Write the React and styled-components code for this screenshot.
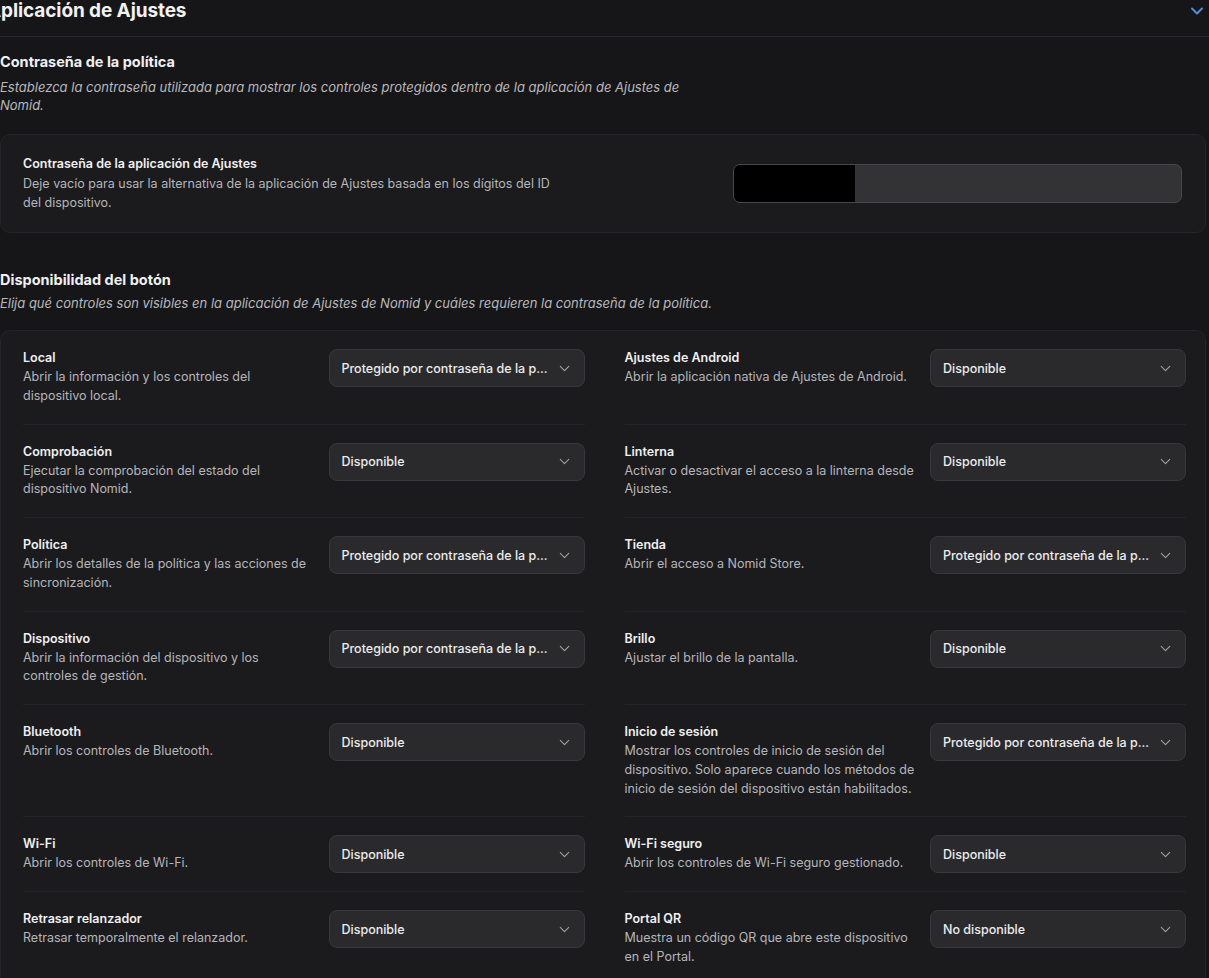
import React from "react";
import styled, { createGlobalStyle } from "styled-components";

const Global = createGlobalStyle`
  html, body { margin: 0; padding: 0; background: #161618; }
  body { font-family: Inter, "Noto Sans", "Liberation Sans", sans-serif; color: #ececee; -webkit-font-smoothing: antialiased; }
  * { box-sizing: border-box; }
`;

const Page = styled.div`
  width: 1209px;
  height: 978px;
  overflow: hidden;
  background: #161618;
`;

const Header = styled.div`
  display: flex;
  align-items: flex-start;
  justify-content: space-between;
  height: 37px;
  border-bottom: 1px solid #2a2a2e;
  padding: 0 2px 0 0;
`;

const Title = styled.h1`
  margin: 0 0 0 -13px;
  font-size: 19px;
  line-height: 22px;
  font-weight: 700;
  color: #f2f2f4;
  letter-spacing: -0.1px;
`;

const Chevron = styled.span`
  display: flex;
  margin-top: ${(p) => p.$mt || 0}px;
  color: ${(p) => p.$color || "#a2a2a6"};
`;

const Body = styled.div`
  padding: 15px 3px 0 0;
`;

const Section = styled.section`
  margin-top: ${(p) => p.$mt || 0}px;
`;

const SectionTitle = styled.h2`
  margin: 0;
  font-size: 14.5px;
  line-height: 20px;
  font-weight: 700;
  color: #f0f0f2;
`;

const SectionDesc = styled.p`
  margin: ${(p) => p.$mt || 6}px 0 0;
  max-width: ${(p) => p.$max || "none"};
  font-size: 13px;
  line-height: 18px;
  font-style: italic;
  color: #b9b9bd;
`;

const Card = styled.div`
  margin-top: ${(p) => p.$mt || 20}px;
  background: #1b1b1e;
  border: 1px solid #252529;
  border-radius: 10px;
`;

const PasswordCard = styled(Card)`
  display: flex;
  align-items: center;
  justify-content: space-between;
  padding: 20px 23px 20px 22px;
`;

const FieldText = styled.div`
  display: flex;
  flex-direction: column;
  gap: 2px;
  max-width: ${(p) => p.$max || "none"};
`;

const FieldLabel = styled.div`
  font-size: 12.5px;
  line-height: 17px;
  font-weight: 600;
  color: #f0f0f2;
`;

const FieldDesc = styled.div`
  font-size: 12.5px;
  line-height: ${(p) => p.$lh || "19px"};
  color: #b6b6ba;
`;

const Input = styled.div`
  display: flex;
  width: 449px;
  height: 39px;
  background: #333336;
  border: 1px solid #48484c;
  border-radius: 7px;
  overflow: hidden;
`;

const Redacted = styled.div`
  width: 121px;
  height: 100%;
  background: #000;
`;

const GridCard = styled(Card)`
  display: grid;
  grid-template-columns: 1fr 1fr;
  column-gap: 40px;
  padding: 0 19px 0 22px;
`;

const Item = styled.div`
  display: grid;
  grid-template-columns: 1fr 256px;
  column-gap: 14px;
  align-items: start;
  padding: 18px 0 18px;
  border-top: ${(p) => (p.$first ? "none" : "1px solid #242428")};
`;

const Select = styled.div`
  display: flex;
  align-items: center;
  justify-content: space-between;
  height: 38px;
  padding: 0 11px 0 12px;
  background: #2a2a2d;
  border: 1px solid #38383c;
  border-radius: 8px;
`;

const SelectValue = styled.span`
  font-size: 12.5px;
  font-weight: 500;
  color: #ececee;
  white-space: nowrap;
  overflow: hidden;
`;

const ChevronDown = ({ size = 12, stroke = 1.6 }) => (
  <svg width={size} height={size} viewBox="0 0 24 24" fill="none" stroke="currentColor" strokeWidth={stroke} strokeLinecap="round" strokeLinejoin="round">
    <path d="M6 9l6 6 6-6" />
  </svg>
);

const P = "Protegido por contraseña de la p...";
const D = "Disponible";

const items = [
  ["Local", "Abrir la información y los controles del dispositivo local.", P],
  ["Ajustes de Android", "Abrir la aplicación nativa de Ajustes de Android.", D],
  ["Comprobación", "Ejecutar la comprobación del estado del dispositivo Nomid.", D],
  ["Linterna", "Activar o desactivar el acceso a la linterna desde Ajustes.", D],
  ["Política", "Abrir los detalles de la política y las acciones de sincronización.", P],
  ["Tienda", "Abrir el acceso a Nomid Store.", P],
  ["Dispositivo", "Abrir la información del dispositivo y los controles de gestión.", P],
  ["Brillo", "Ajustar el brillo de la pantalla.", D],
  ["Bluetooth", "Abrir los controles de Bluetooth.", D],
  ["Inicio de sesión", "Mostrar los controles de inicio de sesión del dispositivo. Solo aparece cuando los métodos de inicio de sesión del dispositivo están habilitados.", P],
  ["Wi-Fi", "Abrir los controles de Wi-Fi.", D],
  ["Wi-Fi seguro", "Abrir los controles de Wi-Fi seguro gestionado.", D],
  ["Retrasar relanzador", "Retrasar temporalmente el relanzador.", D],
  ["Portal QR", "Muestra un código QR que abre este dispositivo en el Portal.", "No disponible"],
];

export default function App() {
  return (
    <Page>
      <Global />
      <Header>
        <Title>Aplicación de Ajustes</Title>
        <Chevron $color="#4f8fd6" $mt={1}>
          <ChevronDown size={20} stroke={2.4} />
        </Chevron>
      </Header>
      <Body>
        <Section>
          <SectionTitle>Contraseña de la política</SectionTitle>
          <SectionDesc $max="720px">
            Establezca la contraseña utilizada para mostrar los controles protegidos dentro de la aplicación de Ajustes de Nomid.
          </SectionDesc>
          <PasswordCard>
            <FieldText $max="545px">
              <FieldLabel>Contraseña de la aplicación de Ajustes</FieldLabel>
              <FieldDesc>
                Deje vacío para usar la alternativa de la aplicación de Ajustes basada en los dígitos del ID del dispositivo.
              </FieldDesc>
            </FieldText>
            <Input>
              <Redacted />
            </Input>
          </PasswordCard>
        </Section>

        <Section $mt={37}>
          <SectionTitle>Disponibilidad del botón</SectionTitle>
          <SectionDesc $mt={4}>
            Elija qué controles son visibles en la aplicación de Ajustes de Nomid y cuáles requieren la contraseña de la política.
          </SectionDesc>
          <GridCard $mt={18}>
            {items.map(([label, desc, value], i) => (
              <Item key={label} $first={i < 2}>
                <FieldText>
                  <FieldLabel>{label}</FieldLabel>
                  <FieldDesc $lh="18.75px">{desc}</FieldDesc>
                </FieldText>
                <Select>
                  <SelectValue>{value}</SelectValue>
                  <Chevron>
                    <ChevronDown size={17} stroke={1.5} />
                  </Chevron>
                </Select>
              </Item>
            ))}
          </GridCard>
        </Section>
      </Body>
    </Page>
  );
}
